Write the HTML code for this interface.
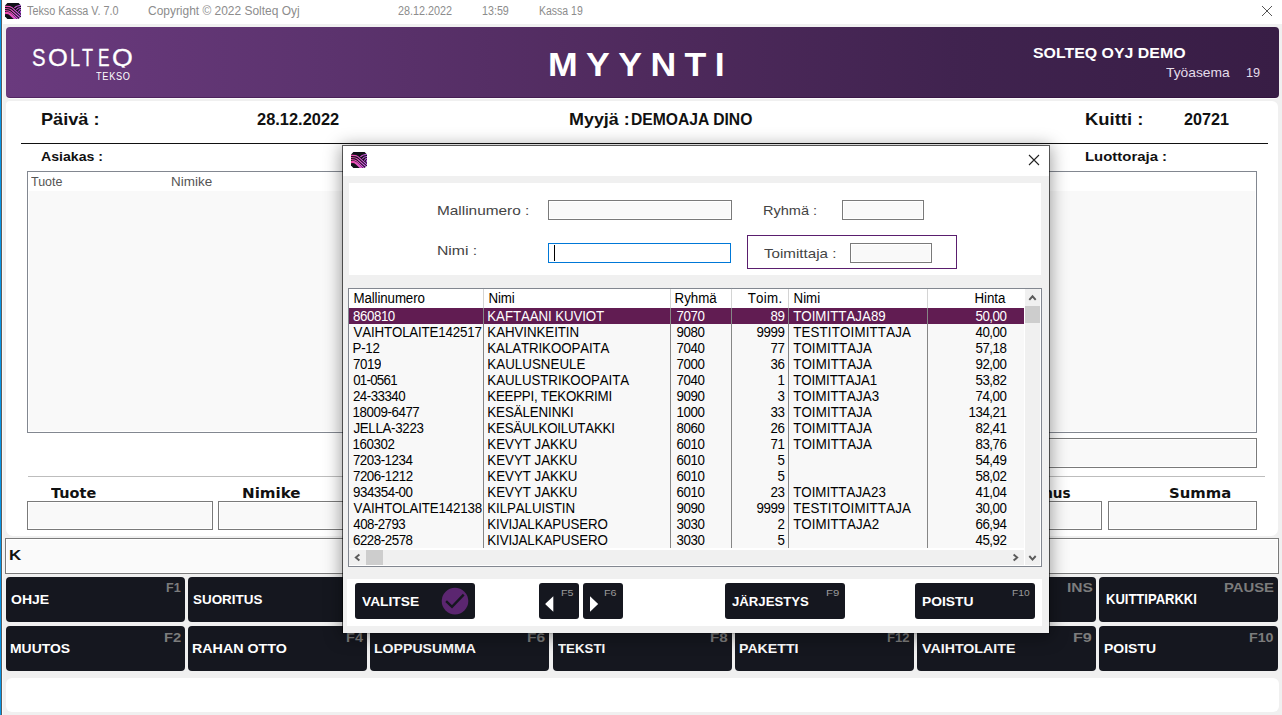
<!DOCTYPE html>
<html lang="fi"><head><meta charset="utf-8"><title>Tekso Kassa</title>
<style>
*{box-sizing:border-box;margin:0;padding:0}
html,body{width:1282px;height:715px;overflow:hidden;background:#f0f0f0;font-family:"Liberation Sans",sans-serif}
.a{position:absolute;white-space:nowrap;line-height:1}
.t{position:absolute;white-space:nowrap;line-height:1;transform-origin:0 0}
.ico{position:absolute}
#tb{left:0;top:0;width:1282px;height:24px;background:#fff}
#lb{left:0;top:0;width:3px;height:715px;background:linear-gradient(90deg,#0a96e6 0,#0a96e6 1px,#5a5a5a 1px,#5a5a5a 2px,#fafafa 2px)}
#hd{left:6px;top:27px;width:1273px;height:71px;border-radius:4px;border-bottom:1px solid rgba(40,0,50,.35);background:linear-gradient(90deg,#6a3a7e 0%,#5c336e 25%,#4f2a5d 50%,#40234f 75%,#381d45 100%)}
#mp{left:6px;top:101px;width:1272px;height:435px;border-radius:4px 6px 7px 7px;background:#fff}
.inp{position:absolute;border:1px solid #7a7a7a;background:#f9f9f9;box-shadow:inset 0 0 0 1px #fff}
.btn{position:absolute;background:#15171f;border-radius:4px;height:45px}
#dlg{left:342px;top:145px;width:708px;height:489px;background:#f0f0f0;background-clip:padding-box;border:1px solid rgba(0,0,0,.6);border-bottom-color:rgba(0,0,0,.12);box-shadow:0 2px 16px 1px rgba(0,0,0,.38)}
#tbl{left:348px;top:288px;width:694px;height:279px;border:1px solid #828790;background:#fff;overflow:hidden}
.r{position:absolute;left:0;width:675px;height:16px;font-size:13.33px;line-height:17px;color:#000;background:#f8f8f8}
.r span{position:absolute;top:0;white-space:nowrap;font-kerning:none;transform:scaleY(1.09);transform-origin:0 13px}
.r.s{background:#611c52;color:#fff}
.c1{left:4.5px;letter-spacing:-.12px}.c2{left:139.5px;letter-spacing:-.15px}.c3{left:327.5px;letter-spacing:-.4px}.c4{right:239.5px;letter-spacing:-.4px}.c5{left:444.5px}.c6{right:17.5px;letter-spacing:-.46px}
.vl{position:absolute;top:0;width:1px;height:260px;background:linear-gradient(#d4d4d4 0,#d4d4d4 19px,#868686 19px)}
.db{position:absolute;background:#15171f;border-radius:3px;height:36px;top:583px}
</style></head><body>

<div id="tb" class="a"></div>
<svg class="ico" style="left:5px;top:3px" width="16" height="16" viewBox="0 0 16 16"><defs><linearGradient id="g1" x1="0" y1="0" x2="16" y2="0" gradientUnits="userSpaceOnUse"><stop offset="0" stop-color="#ee48a4"/><stop offset=".5" stop-color="#e055c8"/><stop offset="1" stop-color="#c45cf2"/></linearGradient><clipPath id="c1"><path d="M2.4 0H13.6L16 2.4V13.6L13.6 16H2.4L0 13.6V2.4Z"/></clipPath></defs><g clip-path="url(#c1)"><rect width="16" height="16" fill="#111118"/><g fill="none" stroke="url(#g1)" stroke-width="1.1"><path d="M0 3.4C3 3.4 5.4 3.2 7 4.6L16.5 13.2"/><path d="M0 5.5C3 5.5 4.8 5.5 6.4 7L16 15.6"/><path d="M0 7.5C2.6 7.5 4.2 7.6 5.8 9.2L13.6 16.4"/><path d="M0 10.2C2 9.6 4 10.2 5.4 11.4L10.8 16.4" stroke-width="2.2"/><path d="M16 2.5C13 2.4 11 3 9.4 5"/><path d="M16 4.5C14 4.4 12.6 5 11.4 6.8"/><path d="M16 6.5C14.8 6.5 14 7.2 13.4 8.6"/><path d="M16 8.4C15.6 8.5 15.3 9.2 15.2 10.4"/></g></g></svg>
<svg class="ico" style="left:1261px;top:5px" width="12" height="12" viewBox="0 0 12 12"><path d="M1 1 L11 11 M11 1 L1 11" stroke="#555" stroke-width="1" fill="none"/></svg>
<div id="lb" class="a"></div>
<div id="hd" class="a"></div>
<div class="a" style="left:8px;top:98px;width:1269px;height:1px;background:#fbfbfb"></div>
<div id="mp" class="a"></div>
<div class="a" style="left:21px;top:143px;width:1247px;height:1px;background:#111"></div>
<div class="a" style="left:27px;top:171px;width:1230px;height:262px;border:1px solid #828790;background:#f9f9f9;box-shadow:inset 0 0 0 1px #fff"><div style="height:19px;background:#fff"></div></div>
<div class="inp" style="left:900px;top:438px;width:357px;height:30px"></div>
<div class="a" style="left:28px;top:476px;width:1237px;height:1px;background:#bdbdbd"></div>
<div class="inp" style="left:27px;top:501px;width:186px;height:29px"></div>
<div class="inp" style="left:218px;top:501px;width:400px;height:29px"></div>
<div class="inp" style="left:960px;top:501px;width:142px;height:29px"></div>
<div class="inp" style="left:1108px;top:501px;width:149px;height:29px"></div>
<div class="inp" style="left:5px;top:538px;width:1274px;height:36px;background:#fafafa"></div>
<div class="btn" style="left:6px;top:577px;width:179px"></div>
<div class="btn" style="left:6px;top:626px;width:179px"></div>
<div class="btn" style="left:188px;top:577px;width:179px"></div>
<div class="btn" style="left:188px;top:626px;width:179px"></div>
<div class="btn" style="left:370px;top:577px;width:179px"></div>
<div class="btn" style="left:370px;top:626px;width:179px"></div>
<div class="btn" style="left:553px;top:577px;width:179px"></div>
<div class="btn" style="left:553px;top:626px;width:179px"></div>
<div class="btn" style="left:735px;top:577px;width:179px"></div>
<div class="btn" style="left:735px;top:626px;width:179px"></div>
<div class="btn" style="left:917px;top:577px;width:179px"></div>
<div class="btn" style="left:917px;top:626px;width:179px"></div>
<div class="btn" style="left:1099px;top:577px;width:179px"></div>
<div class="btn" style="left:1099px;top:626px;width:179px"></div>
<div class="a" style="left:6px;top:678px;width:1273px;height:34px;border-radius:6px;background:#fff"></div>
<div id="logo"><span class="t" id="lg_S" style="left:32.18px;top:47.18px;font-size:23.5px;color:#fff;font-family:'Liberation Sans',sans-serif;transform:scaleX(0.8657);-webkit-text-stroke:0.3px #fff">S</span><span class="t" id="lg_O" style="left:47.96px;top:47.18px;font-size:23.5px;color:#fff;font-family:'Liberation Sans',sans-serif;transform:scaleX(1.0809);-webkit-text-stroke:0.3px #fff">O</span><span class="t" id="lg_L" style="left:69.74px;top:47.18px;font-size:23.5px;color:#fff;font-family:'Liberation Sans',sans-serif;transform:scaleX(0.7746);-webkit-text-stroke:0.3px #fff">L</span><span class="t" id="lg_T" style="left:82.24px;top:47.18px;font-size:23.5px;color:#fff;font-family:'Liberation Sans',sans-serif;transform:scaleX(0.7689);-webkit-text-stroke:0.3px #fff">T</span><span class="t" id="lg_E" style="left:98.02px;top:47.18px;font-size:23.5px;color:#fff;font-family:'Liberation Sans',sans-serif;transform:scaleX(0.7339);-webkit-text-stroke:0.3px #fff">E</span><span class="t" id="lg_Q" style="left:111.80px;top:47.18px;font-size:23.5px;color:#fff;font-family:'Liberation Sans',sans-serif;transform:scaleX(1.1368);-webkit-text-stroke:0.3px #fff;clip-path:inset(0 0 3px 0)">Q</span></div>
<span class="t" id="t1" style="left:26.78px;top:5.01px;font-size:12.5px;color:#8c8c8c;font-family:'Liberation Sans',sans-serif;transform:scaleX(0.8654)">Tekso Kassa V. 7.0</span>
<span class="t" id="t2" style="left:148.00px;top:5.01px;font-size:12.5px;color:#8c8c8c;font-family:'Liberation Sans',sans-serif;transform:scaleX(0.9559)">Copyright © 2022 Solteq Oyj</span>
<span class="t" id="t3" style="left:397.56px;top:5.01px;font-size:12.5px;color:#8c8c8c;font-family:'Liberation Sans',sans-serif;transform:scaleX(0.8654)">28.12.2022</span>
<span class="t" id="t4" style="left:482.30px;top:5.01px;font-size:12.5px;color:#8c8c8c;font-family:'Liberation Sans',sans-serif;transform:scaleX(0.8567)">13:59</span>
<span class="t" id="t5" style="left:538.96px;top:5.01px;font-size:12.5px;color:#8c8c8c;font-family:'Liberation Sans',sans-serif;transform:scaleX(0.8389)">Kassa 19</span>
<span class="t" id="lg2" style="left:96.42px;top:71.53px;font-size:10px;color:#fff;font-family:'Liberation Sans',sans-serif;letter-spacing:0.77px;transform:scaleX(0.9200)">TEKSO</span>
<span class="t" id="myy" style="left:547.78px;top:47.93px;font-size:33px;color:#fff;font-family:'Liberation Sans',sans-serif;font-weight:bold;letter-spacing:7.78px;transform:scaleX(1.0800)">MYYNTI</span>
<span class="t" id="sod" style="left:1033.40px;top:45.51px;font-size:14.5px;color:#fff;font-family:'Liberation Sans',sans-serif;font-weight:bold;transform:scaleX(1.0963)">SOLTEQ OYJ DEMO</span>
<span class="t" id="tyo" style="left:1166.22px;top:65.98px;font-size:13px;color:#e4dcea;font-family:'Liberation Sans',sans-serif;transform:scaleX(1.0625)">Työasema</span>
<span class="t" id="n19" style="left:1246.25px;top:65.98px;font-size:13px;color:#e4dcea;font-family:'Liberation Sans',sans-serif;transform:scaleX(0.9779)">19</span>
<span class="t" id="paiva" style="left:40.52px;top:110.79px;font-size:17px;color:#111;font-family:'Liberation Sans',sans-serif;font-weight:bold;transform:scaleX(1.0686)">Päivä :</span>
<span class="t" id="pvm" style="left:256.71px;top:110.79px;font-size:17px;color:#111;font-family:'Liberation Sans',sans-serif;font-weight:bold;transform:scaleX(0.9660)">28.12.2022</span>
<span class="t" id="myyja" style="left:568.84px;top:110.79px;font-size:17px;color:#111;font-family:'Liberation Sans',sans-serif;font-weight:bold;transform:scaleX(1.0538)">Myyjä :</span>
<span class="t" id="dino" style="left:630.88px;top:112.14px;font-size:16px;color:#111;font-family:'Liberation Sans',sans-serif;font-weight:bold;transform:scaleX(0.9796)">DEMOAJA DINO</span>
<span class="t" id="kuitti" style="left:1084.50px;top:110.79px;font-size:17px;color:#111;font-family:'Liberation Sans',sans-serif;font-weight:bold;transform:scaleX(1.0836)">Kuitti :</span>
<span class="t" id="knro" style="left:1184.41px;top:110.79px;font-size:17px;color:#111;font-family:'Liberation Sans',sans-serif;font-weight:bold;transform:scaleX(0.9521)">20721</span>
<span class="t" id="asiakas" style="left:40.92px;top:149.78px;font-size:13px;color:#111;font-family:'Liberation Sans',sans-serif;font-weight:bold;transform:scaleX(1.0859)">Asiakas :</span>
<span class="t" id="luotto" style="left:1084.73px;top:149.78px;font-size:13px;color:#111;font-family:'Liberation Sans',sans-serif;font-weight:bold;transform:scaleX(1.1478)">Luottoraja :</span>
<span class="t" id="ltuote" style="left:31.45px;top:174.68px;font-size:13px;color:#555;font-family:'Liberation Sans',sans-serif;transform:scaleX(0.9604)">Tuote</span>
<span class="t" id="lnimike" style="left:171.22px;top:174.68px;font-size:13px;color:#555;font-family:'Liberation Sans',sans-serif;transform:scaleX(1.0354)">Nimike</span>
<span class="t" id="tuote" style="left:50.50px;top:486.66px;font-size:13.5px;color:#111;font-family:'DejaVu Sans','Liberation Sans',sans-serif;font-weight:bold;transform:scaleX(1.0705)">Tuote</span>
<span class="t" id="nimike" style="left:241.64px;top:486.66px;font-size:13.5px;color:#111;font-family:'DejaVu Sans','Liberation Sans',sans-serif;font-weight:bold;transform:scaleX(1.1182)">Nimike</span>
<span class="t" id="summa" style="left:1169.36px;top:486.66px;font-size:13.5px;color:#111;font-family:'DejaVu Sans','Liberation Sans',sans-serif;font-weight:bold;transform:scaleX(1.0984)">Summa</span>
<span class="t" id="alennus" style="left:1008.80px;top:486.66px;font-size:13.5px;color:#111;font-family:'DejaVu Sans','Liberation Sans',sans-serif;font-weight:bold;transform:scaleX(1.0084)">Alennus</span>
<span class="t" id="kk" style="left:8.90px;top:547.26px;font-size:15.5px;color:#111;font-family:'Liberation Sans',sans-serif;font-weight:bold;transform:scaleX(1.0918)">K</span>
<span class="t" id="b_ohje" style="left:10.74px;top:592.68px;font-size:13px;color:#fff;font-family:'Liberation Sans',sans-serif;font-weight:bold;transform:scaleX(1.0785)">OHJE</span>
<span class="t" id="b_suor" style="left:192.86px;top:592.68px;font-size:13px;color:#fff;font-family:'Liberation Sans',sans-serif;font-weight:bold;transform:scaleX(1.0337)">SUORITUS</span>
<span class="t" id="b_kuit" style="left:1105.55px;top:592.03px;font-size:14px;color:#fff;font-family:'Liberation Sans',sans-serif;font-weight:bold;transform:scaleX(0.9297)">KUITTIPARKKI</span>
<span class="t" id="b_muut" style="left:10.39px;top:641.98px;font-size:13px;color:#fff;font-family:'Liberation Sans',sans-serif;font-weight:bold;transform:scaleX(1.0718)">MUUTOS</span>
<span class="t" id="b_raha" style="left:192.27px;top:641.98px;font-size:13px;color:#fff;font-family:'Liberation Sans',sans-serif;font-weight:bold;transform:scaleX(1.0977)">RAHAN OTTO</span>
<span class="t" id="b_lopp" style="left:374.48px;top:641.98px;font-size:13px;color:#fff;font-family:'Liberation Sans',sans-serif;font-weight:bold;transform:scaleX(1.0846)">LOPPUSUMMA</span>
<span class="t" id="b_teks" style="left:558.27px;top:641.98px;font-size:13px;color:#fff;font-family:'Liberation Sans',sans-serif;font-weight:bold;transform:scaleX(1.0204)">TEKSTI</span>
<span class="t" id="b_pake" style="left:738.98px;top:641.98px;font-size:13px;color:#fff;font-family:'Liberation Sans',sans-serif;font-weight:bold;transform:scaleX(1.0890)">PAKETTI</span>
<span class="t" id="b_vaih" style="left:921.73px;top:641.98px;font-size:13px;color:#fff;font-family:'Liberation Sans',sans-serif;font-weight:bold;transform:scaleX(1.0928)">VAIHTOLAITE</span>
<span class="t" id="b_pois" style="left:1103.69px;top:641.98px;font-size:13px;color:#fff;font-family:'Liberation Sans',sans-serif;font-weight:bold;transform:scaleX(1.0746)">POISTU</span>
<span class="t" id="f1" style="left:165.98px;top:581.48px;font-size:13px;color:#7c7c7c;font-family:'Liberation Sans',sans-serif;font-weight:bold;transform:scaleX(0.9653)">F1</span>
<span class="t" id="f3" style="left:346.05px;top:581.48px;font-size:13px;color:#7c7c7c;font-family:'Liberation Sans',sans-serif;font-weight:bold;transform:scaleX(1.1187)">F3</span>
<span class="t" id="f5" style="left:528.06px;top:581.48px;font-size:13px;color:#7c7c7c;font-family:'Liberation Sans',sans-serif;font-weight:bold;transform:scaleX(1.1154)">F5</span>
<span class="t" id="f7" style="left:710.56px;top:581.48px;font-size:13px;color:#7c7c7c;font-family:'Liberation Sans',sans-serif;font-weight:bold;transform:scaleX(1.1167)">F7</span>
<span class="t" id="f11" style="left:888.18px;top:581.48px;font-size:13px;color:#7c7c7c;font-family:'Liberation Sans',sans-serif;font-weight:bold;transform:scaleX(0.9708)">F11</span>
<span class="t" id="ins" style="left:1066.69px;top:581.48px;font-size:13px;color:#7c7c7c;font-family:'Liberation Sans',sans-serif;font-weight:bold;transform:scaleX(1.1944)">INS</span>
<span class="t" id="pause" style="left:1224.14px;top:581.48px;font-size:13px;color:#7c7c7c;font-family:'Liberation Sans',sans-serif;font-weight:bold;transform:scaleX(1.1412)">PAUSE</span>
<span class="t" id="f2" style="left:163.64px;top:630.58px;font-size:13px;color:#7c7c7c;font-family:'Liberation Sans',sans-serif;font-weight:bold;transform:scaleX(1.1331)">F2</span>
<span class="t" id="f4" style="left:345.56px;top:630.58px;font-size:13px;color:#7c7c7c;font-family:'Liberation Sans',sans-serif;font-weight:bold;transform:scaleX(1.1180)">F4</span>
<span class="t" id="f6" style="left:526.99px;top:630.58px;font-size:13px;color:#7c7c7c;font-family:'Liberation Sans',sans-serif;font-weight:bold;transform:scaleX(1.1980)">F6</span>
<span class="t" id="f8" style="left:709.51px;top:630.58px;font-size:13px;color:#7c7c7c;font-family:'Liberation Sans',sans-serif;font-weight:bold;transform:scaleX(1.1726)">F8</span>
<span class="t" id="f12" style="left:886.75px;top:630.58px;font-size:13px;color:#7c7c7c;font-family:'Liberation Sans',sans-serif;font-weight:bold;transform:scaleX(1.0102)">F12</span>
<span class="t" id="f9" style="left:1073.35px;top:630.58px;font-size:13px;color:#7c7c7c;font-family:'Liberation Sans',sans-serif;font-weight:bold;transform:scaleX(1.2413)">F9</span>
<span class="t" id="f10" style="left:1249.47px;top:630.58px;font-size:13px;color:#7c7c7c;font-family:'Liberation Sans',sans-serif;font-weight:bold;transform:scaleX(1.0955)">F10</span>
<div id="dlg" class="a"></div>
<div class="a" style="left:343px;top:146px;width:706px;height:30px;background:#fff"></div>
<svg class="ico" style="left:351px;top:152px" width="16" height="16" viewBox="0 0 16 16"><defs><linearGradient id="g2" x1="0" y1="0" x2="16" y2="0" gradientUnits="userSpaceOnUse"><stop offset="0" stop-color="#ee48a4"/><stop offset=".5" stop-color="#e055c8"/><stop offset="1" stop-color="#c45cf2"/></linearGradient><clipPath id="c2"><path d="M2.4 0H13.6L16 2.4V13.6L13.6 16H2.4L0 13.6V2.4Z"/></clipPath></defs><g clip-path="url(#c2)"><rect width="16" height="16" fill="#111118"/><g fill="none" stroke="url(#g2)" stroke-width="1.1"><path d="M0 3.4C3 3.4 5.4 3.2 7 4.6L16.5 13.2"/><path d="M0 5.5C3 5.5 4.8 5.5 6.4 7L16 15.6"/><path d="M0 7.5C2.6 7.5 4.2 7.6 5.8 9.2L13.6 16.4"/><path d="M0 10.2C2 9.6 4 10.2 5.4 11.4L10.8 16.4" stroke-width="2.2"/><path d="M16 2.5C13 2.4 11 3 9.4 5"/><path d="M16 4.5C14 4.4 12.6 5 11.4 6.8"/><path d="M16 6.5C14.8 6.5 14 7.2 13.4 8.6"/><path d="M16 8.4C15.6 8.5 15.3 9.2 15.2 10.4"/></g></g></svg>
<svg class="ico" style="left:1028px;top:154px" width="12" height="12" viewBox="0 0 12 12"><path d="M1 1 L11 11 M11 1 L1 11" stroke="#222" stroke-width="1.1" fill="none"/></svg>
<div class="a" style="left:349px;top:183px;width:692px;height:92px;background:#fff"></div>
<div class="inp" style="left:548px;top:200px;width:184px;height:20px"></div>
<div class="inp" style="left:548px;top:243px;width:183px;height:20px;border-color:#0078d7;background:#fff"><div style="position:absolute;left:5px;top:1px;width:1px;height:16px;background:#000"></div></div>
<div class="inp" style="left:842px;top:200px;width:82px;height:20px"></div>
<div class="a" style="left:747px;top:235px;width:210px;height:34px;border:1px solid #5a1e6e"></div>
<div class="inp" style="left:850px;top:243px;width:82px;height:20px"></div>
<div id="tbl" class="a">
<div class="r" style="top:0;height:19px;line-height:20px;background:#fff;width:692px"><span class="c1">Mallinumero</span><span class="c2">Nimi</span><span class="c3" style="left:325.5px;letter-spacing:0">Ryhmä</span><span class="c4" style="right:258.5px;letter-spacing:.3px">Toim.</span><span class="c5">Nimi</span><span class="c6" style="right:35.5px;letter-spacing:0">Hinta</span></div>
<div class="r s" style="top:19px"><span style="left:4.07px;letter-spacing:-0.455px">860810</span><span style="left:138.33px;letter-spacing:-0.113px">KAFTAANI KUVIOT</span><span class="c3">7070</span><span class="c4">89</span><span style="left:444.13px;letter-spacing:0.007px">TOIMITTAJA89</span><span class="c6">50,00</span></div>
<div class="r" style="top:35px"><span style="left:4.60px;letter-spacing:-0.179px">VAIHTOLAITE142517</span><span style="left:138.33px;letter-spacing:-0.074px">KAHVINKEITIN</span><span class="c3">9080</span><span class="c4">9999</span><span style="left:444.13px;letter-spacing:0.163px">TESTITOIMITTAJA</span><span class="c6">40,00</span></div>
<div class="r" style="top:51px"><span style="left:3.53px;letter-spacing:-0.260px">P-12</span><span style="left:138.33px;letter-spacing:-0.108px">KALATRIKOOPAITA</span><span class="c3">7040</span><span class="c4">77</span><span style="left:444.13px;letter-spacing:0.117px">TOIMITTAJA</span><span class="c6">57,18</span></div>
<div class="r" style="top:67px"><span style="left:3.93px;letter-spacing:-0.426px">7019</span><span style="left:138.33px;letter-spacing:0.032px">KAULUSNEULE</span><span class="c3">7000</span><span class="c4">36</span><span style="left:444.13px;letter-spacing:0.117px">TOIMITTAJA</span><span class="c6">92,00</span></div>
<div class="r" style="top:83px"><span style="left:4.13px;letter-spacing:-0.742px">01-0561</span><span style="left:138.33px;letter-spacing:-0.067px">KAULUSTRIKOOPAITA</span><span class="c3">7040</span><span class="c4">1</span><span style="left:444.13px;letter-spacing:-0.100px">TOIMITTAJA1</span><span class="c6">53,82</span></div>
<div class="r" style="top:99px"><span style="left:3.93px;letter-spacing:-0.514px">24-33340</span><span style="left:138.33px;letter-spacing:-0.255px">KEEPPI, TEKOKRIMI</span><span class="c3">9090</span><span class="c4">3</span><span style="left:444.13px;letter-spacing:0.093px">TOIMITTAJA3</span><span class="c6">74,00</span></div>
<div class="r" style="top:115px"><span style="left:3.60px;letter-spacing:-0.440px">18009-6477</span><span style="left:138.33px;letter-spacing:-0.110px">KESÄLENINKI</span><span class="c3">1000</span><span class="c4">33</span><span style="left:444.13px;letter-spacing:0.117px">TOIMITTAJA</span><span class="c6">134,21</span></div>
<div class="r" style="top:131px"><span style="left:4.40px;letter-spacing:-0.315px">JELLA-3223</span><span style="left:138.33px;letter-spacing:-0.235px">KESÄULKOILUTAKKI</span><span class="c3">8060</span><span class="c4">26</span><span style="left:444.13px;letter-spacing:0.117px">TOIMITTAJA</span><span class="c6">82,41</span></div>
<div class="r" style="top:147px"><span style="left:3.60px;letter-spacing:-0.435px">160302</span><span style="left:138.33px;letter-spacing:-0.030px">KEVYT JAKKU</span><span class="c3">6010</span><span class="c4">71</span><span style="left:444.13px;letter-spacing:0.117px">TOIMITTAJA</span><span class="c6">83,76</span></div>
<div class="r" style="top:163px"><span style="left:3.93px;letter-spacing:-0.481px">7203-1234</span><span style="left:138.33px;letter-spacing:-0.030px">KEVYT JAKKU</span><span class="c3">6010</span><span class="c4">5</span><span class="c6">54,49</span></div>
<div class="r" style="top:179px"><span style="left:3.93px;letter-spacing:-0.447px">7206-1212</span><span style="left:138.33px;letter-spacing:-0.030px">KEVYT JAKKU</span><span class="c3">6010</span><span class="c4">5</span><span class="c6">58,02</span></div>
<div class="r" style="top:195px"><span style="left:4.00px;letter-spacing:-0.472px">934354-00</span><span style="left:138.33px;letter-spacing:-0.030px">KEVYT JAKKU</span><span class="c3">6010</span><span class="c4">23</span><span style="left:444.13px;letter-spacing:0.010px">TOIMITTAJA23</span><span class="c6">41,04</span></div>
<div class="r" style="top:211px"><span style="left:4.60px;letter-spacing:-0.164px">VAIHTOLAITE142138</span><span style="left:138.33px;letter-spacing:-0.102px">KILPALUISTIN</span><span class="c3">9090</span><span class="c4">9999</span><span style="left:444.13px;letter-spacing:0.163px">TESTITOIMITTAJA</span><span class="c6">30,00</span></div>
<div class="r" style="top:227px"><span style="left:4.33px;letter-spacing:-0.562px">408-2793</span><span style="left:138.33px;letter-spacing:-0.118px">KIVIJALKAPUSERO</span><span class="c3">3030</span><span class="c4">2</span><span style="left:444.13px;letter-spacing:0.080px">TOIMITTAJA2</span><span class="c6">66,94</span></div>
<div class="r" style="top:243px"><span style="left:3.93px;letter-spacing:-0.456px">6228-2578</span><span style="left:138.33px;letter-spacing:-0.118px">KIVIJALKAPUSERO</span><span class="c3">3030</span><span class="c4">5</span><span class="c6">45,92</span></div>
<div class="vl" style="left:134px"></div>
<div class="vl" style="left:321px"></div>
<div class="vl" style="left:382px"></div>
<div class="vl" style="left:439px"></div>
<div class="vl" style="left:578px"></div>
<div style="position:absolute;left:675px;top:0;width:17px;height:277px;background:#fff"></div>
<div style="position:absolute;left:0;top:259px;width:692px;height:18px;background:#fff"></div>
<div style="position:absolute;left:676px;top:0;width:15px;height:276px;background:#f0f0f0"></div>
<div style="position:absolute;left:0;top:261px;width:675px;height:15px;background:#f0f0f0"></div>
<div style="position:absolute;left:676px;top:17px;width:15px;height:17px;background:#cdcdcd"></div>
<div style="position:absolute;left:17px;top:261px;width:17px;height:15px;background:#cdcdcd"></div>
<svg style="position:absolute;left:675px;top:0" width="17" height="17" viewBox="0 0 17 17"><path d="M5.3 10.9 L8.5 7.3 L11.7 10.9" stroke="#5a5a5a" stroke-width="1.9" fill="none"/></svg>
<svg style="position:absolute;left:675px;top:260px" width="17" height="17" viewBox="0 0 17 17"><path d="M5.3 7 L8.5 10.6 L11.7 7" stroke="#5a5a5a" stroke-width="1.9" fill="none"/></svg>
<svg style="position:absolute;left:0;top:260px" width="17" height="17" viewBox="0 0 17 17"><path d="M10.4 5.6 L6.8 8.6 L10.4 11.6" stroke="#5a5a5a" stroke-width="1.9" fill="none"/></svg>
<svg style="position:absolute;left:658px;top:260px" width="17" height="17" viewBox="0 0 17 17"><path d="M6.6 5.6 L10.2 8.6 L6.6 11.6" stroke="#5a5a5a" stroke-width="1.9" fill="none"/></svg>
</div>
<div class="a" style="left:347px;top:579px;width:695px;height:47px;background:#fff"></div>
<div class="db" style="left:355px;width:120px"><svg style="position:absolute;left:86px;top:4px" width="28" height="28" viewBox="0 0 28 28"><circle cx="14" cy="14.1" r="13.3" fill="#5b2670"/><path d="M5.1 14.1 L11 19.8 L22.7 7.6" stroke="#15171f" stroke-width="2.4" fill="none"/></svg></div>
<div class="db" style="left:539px;width:40px"><svg style="position:absolute;left:6px;top:13px" width="9" height="16" viewBox="0 0 9 16"><path d="M8.3 0.2 L0.1 8 L8.3 15.7 Z" fill="#fff"/></svg></div>
<div class="db" style="left:583px;width:40px"><svg style="position:absolute;left:7px;top:13px" width="9" height="16" viewBox="0 0 9 16"><path d="M0 0.2 L8.2 8 L0 15.7 Z" fill="#fff"/></svg></div>
<div class="db" style="left:725px;width:120px"></div>
<div class="db" style="left:915px;width:120px"></div>
<span class="t" id="lmalli" style="left:436.57px;top:203.56px;font-size:13.5px;color:#444;font-family:'Liberation Sans',sans-serif;transform:scaleX(1.1389);z-index:5">Mallinumero :</span>
<span class="t" id="lnimi" style="left:436.54px;top:243.86px;font-size:13.5px;color:#444;font-family:'Liberation Sans',sans-serif;transform:scaleX(1.1666);z-index:5">Nimi :</span>
<span class="t" id="lryhma" style="left:762.64px;top:203.86px;font-size:13.5px;color:#444;font-family:'Liberation Sans',sans-serif;transform:scaleX(1.0772);z-index:5">Ryhmä :</span>
<span class="t" id="ltoim" style="left:763.50px;top:246.76px;font-size:13.5px;color:#444;font-family:'Liberation Sans',sans-serif;transform:scaleX(1.1227);z-index:5">Toimittaja :</span>
<span class="t" id="d_val" style="left:362.03px;top:594.78px;font-size:13px;color:#fff;font-family:'Liberation Sans',sans-serif;font-weight:bold;transform:scaleX(1.0602);z-index:5">VALITSE</span>
<span class="t" id="d_jar" style="left:731.70px;top:594.78px;font-size:13px;color:#fff;font-family:'Liberation Sans',sans-serif;font-weight:bold;transform:scaleX(1.0135);z-index:5">JÄRJESTYS</span>
<span class="t" id="d_poi" style="left:921.60px;top:594.78px;font-size:13px;color:#fff;font-family:'Liberation Sans',sans-serif;font-weight:bold;transform:scaleX(1.0661);z-index:5">POISTU</span>
<span class="t" id="d_f5" style="left:560.64px;top:587.95px;font-size:9.5px;color:#9a9a9a;font-family:'Liberation Sans',sans-serif;transform:scaleX(1.1273);z-index:5">F5</span>
<span class="t" id="d_f6" style="left:604.34px;top:587.95px;font-size:9.5px;color:#9a9a9a;font-family:'Liberation Sans',sans-serif;transform:scaleX(1.1373);z-index:5">F6</span>
<span class="t" id="d_f9" style="left:825.99px;top:587.95px;font-size:9.5px;color:#9a9a9a;font-family:'Liberation Sans',sans-serif;transform:scaleX(1.1934);z-index:5">F9</span>
<span class="t" id="d_f10" style="left:1011.78px;top:587.95px;font-size:9.5px;color:#9a9a9a;font-family:'Liberation Sans',sans-serif;transform:scaleX(1.0743);z-index:5">F10</span>
</body></html>
